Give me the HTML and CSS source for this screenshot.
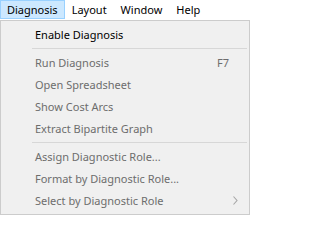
FILE: index.html
```html
<!DOCTYPE html>
<html>
<head>
<meta charset="utf-8">
<link rel="stylesheet" href="styles.css">
</head>
<body>
<div class="menubar">
  <div class="top-item active">Diagnosis</div>
  <div class="top-item">Layout</div>
  <div class="top-item">Window</div>
  <div class="top-item">Help</div>
</div>
<div class="menu">
  <div class="item">Enable Diagnosis</div>
  <div class="sep"></div>
  <div class="item disabled"><span>Run Diagnosis</span><span class="key">F7</span></div>
  <div class="item disabled">Open Spreadsheet</div>
  <div class="item disabled">Show Cost Arcs</div>
  <div class="item disabled">Extract Bipartite Graph</div>
  <div class="sep"></div>
  <div class="item disabled">Assign Diagnostic Role...</div>
  <div class="item disabled">Format by Diagnostic Role...</div>
  <div class="item disabled"><span>Select by Diagnostic Role</span><svg class="chev" width="5" height="9" viewBox="0 0 5 9"><polyline points="0.5,0.5 4,4.5 0.5,8.5" fill="none" stroke="#a6a6a6" stroke-width="1.1"/></svg></div>
</div>
</body>
</html>
```
FILE: styles.css
```css
html, body {
  margin: 0;
  padding: 0;
  background: #ffffff;
}
body {
  font-family: "Noto Sans", "Open Sans", sans-serif;
  font-size: 11px;
  color: #000;
  width: 250px;
  height: 215px;
  overflow: hidden;
}
.menubar {
  display: flex;
  height: 20px;
  background: #fff;
}
.top-item {
  box-sizing: border-box;
  height: 19px;
  padding: 0 6px;
  border: 1px solid transparent;
  display: flex;
  align-items: center;
  line-height: 1;
}
.top-item.active {
  background: #cce8ff;
  border-color: #99d1ff;
}
.menu {
  box-sizing: border-box;
  width: 250px;
  height: 195px;
  background: #f0f0f0;
  border: 1px solid #cccccc;
  padding: 2px 0;
}
.item {
  height: 22px;
  display: flex;
  align-items: center;
  padding-left: 34px;
  padding-right: 20px;
  line-height: 1;
}
.item.disabled {
  color: #6d6d6d;
}
.key {
  margin-left: auto;
}
.chev {
  margin-left: auto;
  margin-right: -9px;
}
.sep {
  height: 1px;
  background: #d7d7d7;
  margin: 3px 2px 2px 31px;
}
```
